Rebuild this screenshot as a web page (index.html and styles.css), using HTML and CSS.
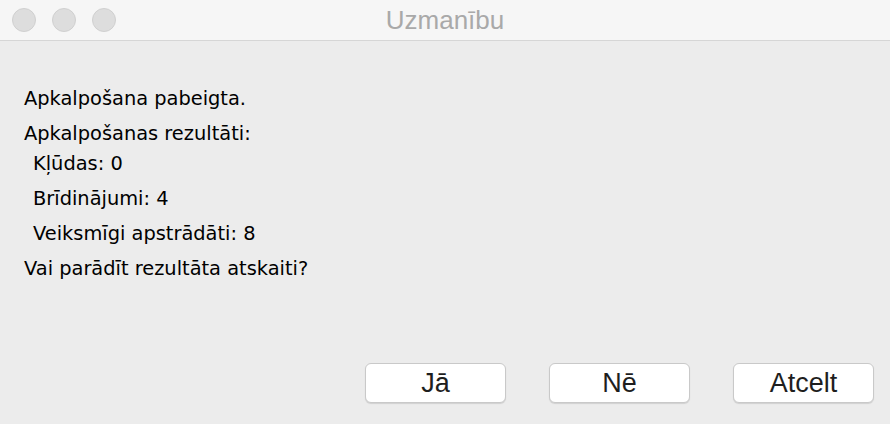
FILE: index.html
```html
<!DOCTYPE html>
<html lang="lv">
<head>
<meta charset="utf-8">
<title>Uzmanību</title>
<link rel="stylesheet" href="styles.css">
</head>
<body>
<div class="window">
  <header class="titlebar">
    <div class="lights">
      <span class="light"></span>
      <span class="light"></span>
      <span class="light"></span>
    </div>
    <div class="title">Uzmanību</div>
  </header>
  <main class="content">
    <div class="message">
      <div class="line">Apkalpošana pabeigta.</div>
      <div class="line short">Apkalpošanas rezultāti:</div>
      <div class="line indent">Kļūdas: 0</div>
      <div class="line indent">Brīdinājumi: 4</div>
      <div class="line indent">Veiksmīgi apstrādāti: 8</div>
      <div class="line">Vai parādīt rezultāta atskaiti?</div>
    </div>
    <div class="buttons">
      <button class="btn">Jā</button>
      <button class="btn">Nē</button>
      <button class="btn">Atcelt</button>
    </div>
  </main>
</div>
</body>
</html>
```
FILE: styles.css
```css
html, body {
  margin: 0;
  padding: 0;
}
body {
  width: 890px;
  height: 424px;
  overflow: hidden;
  background: #ececec;
}
.window {
  display: flex;
  flex-direction: column;
  height: 424px;
}
.titlebar {
  position: relative;
  height: 40px;
  background: #f6f6f6;
  border-bottom: 1px solid #d6d6d6;
  display: flex;
  align-items: center;
  justify-content: center;
}
.lights {
  position: absolute;
  left: 12px;
  top: 8px;
  display: flex;
  gap: 16px;
}
.light {
  width: 22px;
  height: 22px;
  border-radius: 50%;
  background: #dddddd;
  border: 1px solid #d0d0d0;
}
.title {
  font-family: "Liberation Sans", Arial, sans-serif;
  font-size: 26px;
  color: #a9a9a9;
  line-height: 40px;
}
.content {
  flex: 1;
  display: flex;
  flex-direction: column;
  justify-content: space-between;
  padding: 40px 16px 21px 24px;
}
.message {
  font-family: "DejaVu Sans", Verdana, sans-serif;
  font-size: 19.4px;
  color: #000;
}
.line {
  height: 35px;
  line-height: 35px;
  white-space: pre;
}
.line.short {
  height: 30px;
}
.indent {
  padding-left: 9px;
}
.buttons {
  display: flex;
  justify-content: flex-end;
  gap: 43px;
}
.btn {
  width: 141px;
  height: 40px;
  background: #ffffff;
  border: 1px solid #c9c9c9;
  border-radius: 6px;
  box-shadow: 0 1px 1px rgba(0,0,0,0.12);
  font-family: "Liberation Sans", Arial, sans-serif;
  font-size: 27px;
  color: #1e1e1e;
  padding: 0;
}
```
